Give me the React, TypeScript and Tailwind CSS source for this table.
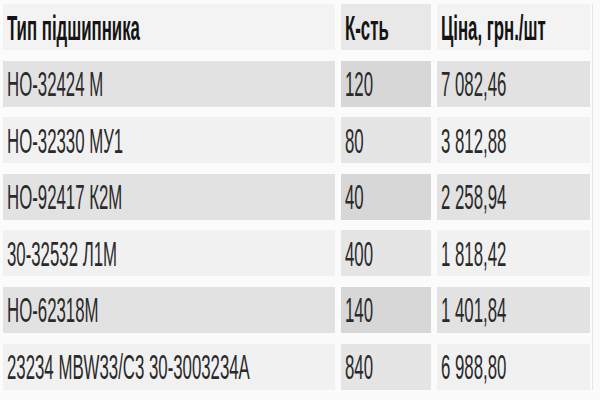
const rows = [
  { name: 'НО-32424 М', qty: '120', price: '7 082,46' },
  { name: 'НО-32330 МУ1', qty: '80', price: '3 812,88' },
  { name: 'НО-92417 К2М', qty: '40', price: '2 258,94' },
  { name: '30-32532 Л1М', qty: '400', price: '1 818,42' },
  { name: 'НО-62318М', qty: '140', price: '1 401,84' },
  { name: '23234 MBW33/C3 30-3003234A', qty: '840', price: '6 988,80' },
];

function Cell({ children, bg, bold }: { children: React.ReactNode; bg: string; bold?: boolean }) {
  return (
    <div className={`h-[46px] flex items-center pl-[4px] overflow-hidden ${bg}`}>
      <span
        className={`inline-block origin-left scale-x-[0.48] whitespace-nowrap text-[35px] leading-none ${
          bold ? 'font-bold text-[#141414]' : 'text-[#2a2a2a]'
        }`}
      >
        {children}
      </span>
    </div>
  );
}

export default function App() {
  return (
    <div
      className="w-[600px] h-[400px] bg-[#fbfbfb] pt-[4px] pl-[3px] overflow-hidden"
      style={{ fontFamily: '"Liberation Sans", Arial, sans-serif' }}
    >
      <div className="grid grid-cols-[332px_90px_153px] gap-x-[6px] gap-y-[10.6px] w-fit border-r border-[#e6e6e6] pr-[2px]">
        <Cell bg="bg-[#f3f3f3]" bold>Тип підшипника</Cell>
        <Cell bg="bg-[#e8e8e8]" bold>К-сть</Cell>
        <Cell bg="bg-[#f3f3f3]" bold>Ціна, грн./шт</Cell>
        {rows.map((r, i) => {
          const odd = i % 2 === 0;
          return (
            <div key={r.name} className="contents">
              <Cell bg={odd ? 'bg-[#e2e2e2]' : 'bg-[#f1f1f1]'}>{r.name}</Cell>
              <Cell bg={odd ? 'bg-[#d7d7d7]' : 'bg-[#e5e5e5]'}>{r.qty}</Cell>
              <Cell bg={odd ? 'bg-[#e2e2e2]' : 'bg-[#f1f1f1]'}>{r.price}</Cell>
            </div>
          );
        })}
      </div>
    </div>
  );
}
